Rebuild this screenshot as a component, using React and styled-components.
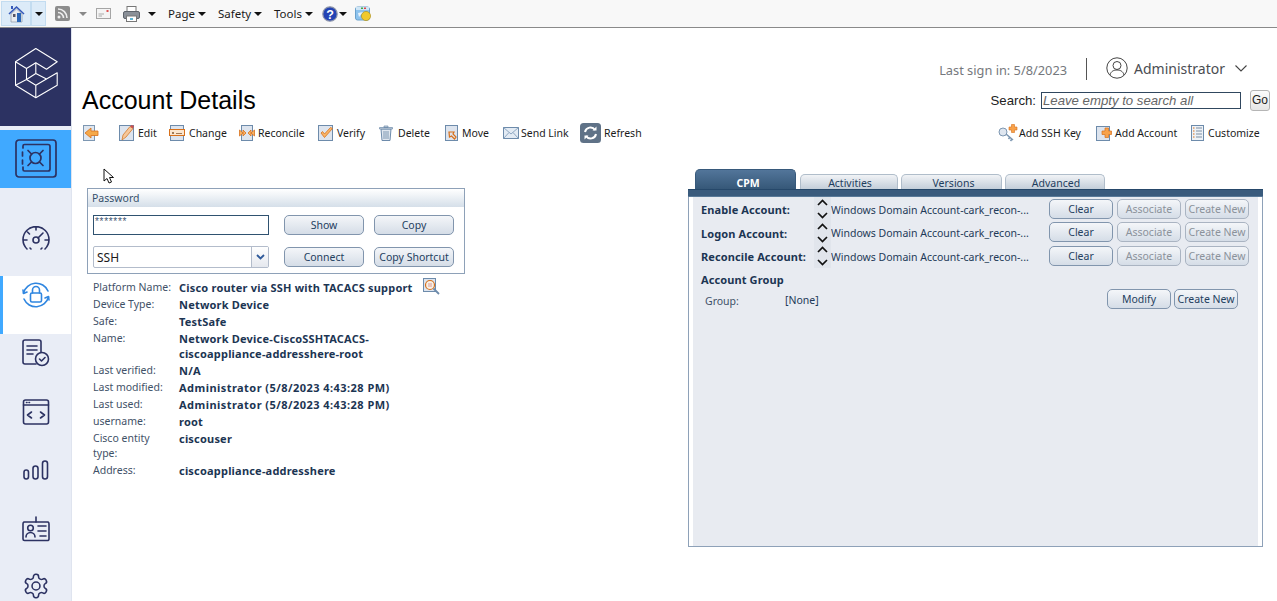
import React from "react";
import styled, { createGlobalStyle } from "styled-components";

const Global = createGlobalStyle`
  html, body { margin: 0; padding: 0; height: 100%; overflow: hidden; background: #fff; }
  #root { height: 100%; }
  * { box-sizing: border-box; }
  svg { flex: none; display: block; }
`;
const UI = `"Noto Sans", "DejaVu Sans", sans-serif`;
const NAVY = "#2c3262";

const Page = styled.div`width: 1277px; height: 601px; display: flex; flex-direction: column; overflow: hidden; font-family: ${UI}; font-size: 11px;`;

/* browser command bar */
const CommandBar = styled.div`height: 28px; flex: none; display: flex; align-items: center; background: #f8f8f8; border-bottom: 1px solid #8a8a8a; padding-left: 1px;`;
const CmdSlot = styled.div`
  display: flex; align-items: center; justify-content: ${p => p.$text ? "flex-start" : "center"}; gap: 3px; height: 25px; flex: none;
  width: ${p => p.$w}px; margin-left: ${p => p.$ml || 0}px;
  background: ${p => p.$on ? "#dcebf8" : "transparent"};
  border: ${p => p.$on ? "1px solid #c3dcf0" : "0"};
  font-size: 11.5px; color: #1a1a1a;
`;
const Caret = styled.span`width: 0; height: 0; flex: none; border-left: 4px solid transparent; border-right: 4px solid transparent; border-top: 4px solid ${p => p.$c || "#111"};`;

const Body = styled.div`flex: 1; display: flex; min-height: 0;`;

/* product sidebar */
const Sidebar = styled.nav`width: 72px; flex: none; background: #e9edf6; border-right: 1px solid #dfe4ef; overflow: hidden;`;
const Brand = styled.div`height: 98px; background: ${NAVY}; display: flex; align-items: center; justify-content: center; margin-right: -1px; padding-bottom: 8px;`;
const VaultTile = styled.div`height: 58px; margin: 4px -1px 30px 0; background: #40a9ff; display: flex; align-items: center; justify-content: center;`;
const NavTile = styled.div`
  height: 58px; display: flex; justify-content: center; padding-top: ${p => p.$pt ?? 5}px; margin-right: ${p => p.$on ? -1 : 0}px;
  background: ${p => p.$on ? "#fff" : "transparent"};
  border-left: 3px solid ${p => p.$on ? "#40a9ff" : "transparent"};
  padding-right: 3px;
`;

const Main = styled.main`flex: 1; min-width: 0; display: flex; flex-direction: column; position: relative;`;
const UserRow = styled.div`height: 57px; flex: none; display: flex; align-items: flex-end; justify-content: flex-end; padding: 0 30px 4px 0;`;
const LastSign = styled.span`font-size: 12.8px; color: #75787d; margin-bottom: 2px;`;
const Divider = styled.span`width: 1px; height: 22px; background: #555; margin: 0 19px 1px; `;
const UserName = styled.span`font-size: 14px; color: #4a4d52; margin: 0 10px 0 6px;`;
const UserBox = styled.div`display: flex; align-items: center; margin-bottom: 2px;`;

const TitleRow = styled.div`height: 33px; flex: none; display: flex; align-items: center; justify-content: space-between; padding: 0 7px 2px 10px;`;
const Title = styled.h1`margin: 0; font: 400 25px "Liberation Sans", Arial, sans-serif; color: #000;`;
const SearchBox = styled.div`display: flex; align-items: center; font: 13.2px "Liberation Sans", Arial, sans-serif; color: #222;`;
const SearchInput = styled.div`width: 200px; height: 17px; margin-left: 5px; border: 1px solid #30475f; font: italic 13.2px/15px "Liberation Sans", Arial, sans-serif; color: #666; padding-left: 1px; white-space: nowrap;`;
const GoButton = styled.div`width: 20px; height: 21px; margin-left: 9px; border: 1px solid #b5b5b5; border-radius: 3px; background: linear-gradient(#fbfbfb, #e6e6e6); font: 12px/19px "Liberation Sans", Arial, sans-serif; text-align: center; color: #222;`;

const ActionRow = styled.div`height: 30px; flex: none; display: flex; align-items: center; justify-content: space-between; padding: 0 19px 1px 11px;`;
const ActionGroup = styled.div`display: flex; align-items: center;`;
const Action = styled.div`display: flex; align-items: center; gap: ${p => p.$gap ?? 4}px; width: ${p => p.$w ? p.$w + "px" : "auto"}; flex: none; font-size: 10.5px; color: #1b1b1b; white-space: nowrap;`;

const Columns = styled.div`flex: 1; display: flex; min-height: 0; position: relative;`;
const Left = styled.section`width: 616px; flex: none; padding: 40px 0 0 15px; position: relative;`;
const CursorMark = styled.span`position: absolute; left: 31px; top: 20px;`;
const PasswordBox = styled.div`width: 378px; height: 86px; border: 1px solid #8ea1b8;`;
const BoxHeader = styled.div`height: 18px; padding-left: 4px; line-height: 18px; font-size: 10.5px; color: #36506c; background: linear-gradient(#fff, #d5dfe9);`;
const BoxGrid = styled.div`display: grid; grid-template-columns: 176px 170px; column-gap: 15px; grid-template-rows: 20px 22px; row-gap: 11px; padding: 8px 0 0 5px; align-items: center;`;
const PwInput = styled.div`height: 20px; border: 1px solid #2f5270; background: #fff; font: 10px/10px "Liberation Sans", sans-serif; color: #3d5570; padding: 1px 0 0 1px; letter-spacing: .7px;`;
const SelectBox = styled.div`height: 22px; border: 1px solid #b3bccb; border-radius: 2px; background: #fff; display: flex; font: 12px/21px "Noto Sans", sans-serif; color: #1a1a1a; padding-left: 3px; justify-content: space-between;`;
const SelectArrow = styled.span`width: 17px; border-left: 1px solid #b3bccb; background: linear-gradient(#fff, #e5e8ee); display: flex; align-items: flex-start; justify-content: center; padding-top: 7px;`;
const PanelButton = styled.div`
  height: 20px; width: ${p => p.$w ? p.$w + "px" : "auto"}; flex: none;
  border: 1px solid ${p => p.$off ? "#aab4c2" : "#8195ad"}; border-radius: 5px;
  background: linear-gradient(#f4f6f9, #d5dde7);
  font-size: 10.5px; line-height: 18px; text-align: center; white-space: nowrap;
  color: ${p => p.$off ? "#8b929b" : "#24405f"};
`;
const ButtonPair = styled.div`display: grid; grid-template-columns: 80px 80px; column-gap: 10px;`;

const Details = styled.div`display: grid; grid-template-columns: 86px auto; justify-content: start; padding: 6px 0 0 6px; line-height: 15px; row-gap: 2px;`;
const DLabel = styled.div`color: #3f5168; font-size: 10.5px; padding-right: 6px;`;
const DValue = styled.div`color: #1c3553; font-weight: 700; display: flex; align-items: flex-start; gap: 10px; white-space: nowrap; letter-spacing: ${p => p.$wide ? ".45px" : ".2px"};`;
const LensMark = styled.span`height: 13px; margin-top: -2px;`;

const Right = styled.section`width: 575px; flex: none; padding-top: 21px; display: flex; flex-direction: column;`;
const Tabs = styled.div`height: 20px; flex: none; display: flex; align-items: flex-end; padding-left: 7px; gap: 3px;`;
const Tab = styled.div`
  height: ${p => p.$on ? 20 : 15}px; width: ${p => p.$w}px; flex: none; margin-right: ${p => p.$on ? 1 : 0}px;
  border: 1px solid ${p => p.$on ? "#37597b" : "#b0bdca"}; border-bottom: 0; border-radius: 5px 5px 0 0;
  background: ${p => p.$on ? "linear-gradient(#52759a, #365878)" : "linear-gradient(#f1f3f6, #c3ced9)"};
  color: ${p => p.$on ? "#fff" : "#1f3e5e"}; font-weight: ${p => p.$on ? 700 : 400}; font-size: 10.5px;
  line-height: ${p => p.$on ? 26 : 16}px; text-align: center; padding-left: ${p => p.$pl || 0}px;
`;
const TabBar = styled.div`height: 8px; flex: none; background: #3a5b7d; border-top: 1px solid #26486a; border-bottom: 1px solid #5a7a99;`;
const TabPanel = styled.div`height: 350px; flex: none; border: 1px solid #8ea1b8; border-top: 0; background: #fff; padding: 0 4px;`;
const TabInner = styled.div`height: 100%; background: #e8ebf1; padding-left: 8px;`;
const TargetGrid = styled.div`display: grid; grid-template-columns: 113px 17px 218px 68px 68px 64px; grid-auto-rows: 23.5px; align-items: center;`;
const TLabel = styled.div`font-weight: 700; color: #1c3553; font-size: 11px; letter-spacing: .1px; padding-top: 2px;`;
const Spin = styled.div`height: 100%; background: #e1e5ec; display: flex; align-items: center; justify-content: center; padding-top: 1px;`;
const TValue = styled.div`color: #1e3a58; white-space: nowrap; overflow: hidden; font-size: 10.5px; padding-top: 2px;`;
const GroupHead = styled.div`font-weight: 700; color: #1c3553; margin-top: 4px; height: 15px; line-height: 15px; letter-spacing: .1px;`;
const GroupRow = styled.div`display: flex; align-items: center; height: 20px; margin-top: 2px; padding-left: 4px; color: #1e3a58; font-size: 10.5px;`;
const GroupLabel = styled.span`width: 80px; color: #3f5168; padding-top: 4px;`;
const GroupValue = styled.span`flex: 1; padding-top: 2px;`;
const GroupButtons = styled.div`display: flex; gap: 3px; padding-right: 20px;`;

/* drawn icons */
const S = { fill: "none", stroke: NAVY, strokeWidth: 1.6, strokeLinecap: "round", strokeLinejoin: "round" };

const Logo = () => (
  <svg width="43" height="51" viewBox="-0.5 -0.5 43 51" fill="none" stroke="#fff" strokeWidth="1.1" strokeLinejoin="round">
    <path d="M20.3 0 L41.7 13.3 L31 20.7 L20.3 14.3 L11 20 L11 31 L20.3 36.7 L41.7 24.3 L41.7 36.7 L20.3 49.3 L0 36.7 L0 13.3 Z" />
    <path d="M0 13.3 L11 20 M20.3 14.3 L20.3 25 M11 31 L20.3 25 L31 30.5 M20.3 36.7 L20.3 49.3 M0 36.7 L11 31" />
  </svg>
);
const VaultIcon = () => (
  <svg width="42" height="40" viewBox="0 0 42 40" fill="none" stroke={NAVY} strokeWidth="1.7" strokeLinecap="round" strokeLinejoin="round">
    <rect x="1" y="1" width="40" height="37" rx="3" />
    <path d="M8 9 V7 a1.5 1.5 0 0 1 1.5-1.5 H33 a2 2 0 0 1 2 2 V30 a2 2 0 0 1-2 2 H9.5 A1.5 1.5 0 0 1 8 30.5 V28 M7.5 13 V17 M7.5 21 V25" />
    <circle cx="20.5" cy="19" r="5.5" />
    <path d="M16.5 15 L13 11.5 M24.5 15 L28 11.5 M16.5 23 L13 26.5 M24.5 23 L28 26.5" />
  </svg>
);
const Gauge = () => (
  <svg width="28" height="26" viewBox="0 0 28 26" {...S}>
    <path d="M5 23 A13 13 0 1 1 23 23 M2 14 H5 M23 14 H26 M5.5 6 L7.5 8 M14 1.5 V4" />
    <circle cx="14" cy="14" r="3" />
    <path d="M16 12 L21 7" />
    <path d="M8 22 L9 23 M20 22 L19 23" />
  </svg>
);
const LockCycle = () => (
  <svg width="28" height="28" viewBox="0 0 28 28" fill="none" stroke="#2f86e0" strokeWidth="1.6" strokeLinecap="round" strokeLinejoin="round">
    <path d="M1.5 12 A13 13 0 0 1 26 10 M26.5 16 A13 13 0 0 1 2 18" />
    <path d="M1 9 L1.5 12.5 L5 11 M27 19 L26.5 15.5 L23 17" />
    <rect x="8.5" y="12" width="11" height="9" rx="1.5" />
    <path d="M10.5 12 V9 a3.5 3.5 0 0 1 7 0 V12" />
  </svg>
);
const DocCheck = () => (
  <svg width="28" height="28" viewBox="0 0 28 28" {...S}>
    <path d="M14 25 H3 a2 2 0 0 1-2-2 V3 a2 2 0 0 1 2-2 H17 a2 2 0 0 1 2 2 V13" />
    <path d="M5 7 H15 M5 11 H15 M5 15 H11" />
    <circle cx="20" cy="20" r="6.5" />
    <path d="M17.5 20 L19.5 22 L23 18.5" />
  </svg>
);
const CodeWin = () => (
  <svg width="28" height="27" viewBox="0 0 28 27" {...S}>
    <rect x="1.5" y="1" width="25" height="24" rx="2" />
    <path d="M1.5 6 H26.5 M9.5 13 L5.5 16 L9.5 19 M18.5 13 L22.5 16 L18.5 19" />
    <path d="M4.5 3.5 H5 M7 3.5 H7.5" />
  </svg>
);
const Bars = () => (
  <svg width="26" height="20" viewBox="0 0 26 20" {...S} style={{ marginTop: 5 }}>
    <rect x="1" y="10" width="4.5" height="9" rx="2.2" />
    <rect x="10" y="6" width="5" height="13" rx="2.5" />
    <rect x="19.5" y="1" width="5" height="18" rx="2.5" />
  </svg>
);
const IdCard = () => (
  <svg width="30" height="26" viewBox="0 0 30 26" {...S}>
    <path d="M15 1 V6" />
    <path d="M10 6 H27 a2 2 0 0 1 1 2 V23 a1.5 1.5 0 0 1-1.5 1.5 H3.5 A1.5 1.5 0 0 1 2 23 V8 a2 2 0 0 1 1-2 H10" />
    <circle cx="9.5" cy="12" r="2.8" />
    <path d="M5 21 a4.5 4.5 0 0 1 9 0 M17 10 H25 M17 15 H25 M19 20 H25" />
  </svg>
);
const Gear = () => (
  <svg width="28" height="28" viewBox="0 0 24 24" fill="none" stroke={NAVY} strokeWidth="1.35" strokeLinecap="round" strokeLinejoin="round">
    <path d="M12.22 2h-.44a2 2 0 0 0-2 2v.18a2 2 0 0 1-1 1.73l-.43.25a2 2 0 0 1-2 0l-.15-.08a2 2 0 0 0-2.73.73l-.22.38a2 2 0 0 0 .73 2.73l.15.1a2 2 0 0 1 1 1.72v.51a2 2 0 0 1-1 1.74l-.15.09a2 2 0 0 0-.73 2.73l.22.38a2 2 0 0 0 2.73.73l.15-.08a2 2 0 0 1 2 0l.43.25a2 2 0 0 1 1 1.73V20a2 2 0 0 0 2 2h.44a2 2 0 0 0 2-2v-.18a2 2 0 0 1 1-1.73l.43-.25a2 2 0 0 1 2 0l.15.08a2 2 0 0 0 2.73-.73l.22-.39a2 2 0 0 0-.73-2.73l-.15-.08a2 2 0 0 1-1-1.74v-.5a2 2 0 0 1 1-1.74l.15-.09a2 2 0 0 0 .73-2.73l-.22-.38a2 2 0 0 0-2.73-.73l-.15.08a2 2 0 0 1-2 0l-.43-.25a2 2 0 0 1-1-1.73V4a2 2 0 0 0-2-2z" />
    <circle cx="12" cy="12" r="3.4" />
  </svg>
);

const Home = () => (
  <svg width="17" height="18" viewBox="0 0 17 18">
    <path d="M1 9 L8.5 2 L16 9" fill="none" stroke="#3558b8" strokeWidth="1.6" />
    <path d="M3 9 L8.5 4 L14 9 V17 H3 Z" fill="#e9ecef" stroke="#8b96a5" strokeWidth=".7" />
    <rect x="9" y="8" width="4" height="9" fill="#2a66b8" />
    <rect x="5" y="9" width="2.5" height="3" fill="#556" />
    <rect x="3" y="1" width="2" height="3" fill="#3558b8" />
  </svg>
);
const Rss = () => (
  <svg width="15" height="15" viewBox="0 0 15 15">
    <rect width="15" height="15" rx="2" fill="#8d8d8d" />
    <circle cx="4" cy="11" r="1.5" fill="#eee" />
    <path d="M3 6.5 A5.5 5.5 0 0 1 8.5 12 M3 3 A9 9 0 0 1 12 12" fill="none" stroke="#eee" strokeWidth="1.6" />
  </svg>
);
const Mail = () => (
  <svg width="15" height="11" viewBox="0 0 15 11">
    <rect x=".5" y=".5" width="14" height="10" fill="#f4f4f4" stroke="#a5a5a5" />
    <rect x="10.5" y="2" width="2" height="2" fill="#d55" />
    <path d="M2.5 6 H8 M2.5 8 H6" stroke="#aaa" />
  </svg>
);
const Printer = () => (
  <svg width="17" height="16" viewBox="0 0 17 16">
    <rect x="4" y=".5" width="9" height="6" fill="#fff" stroke="#777" />
    <rect x=".5" y="5.5" width="16" height="7" rx="1.5" fill="#8a9098" stroke="#5d636b" />
    <rect x="3.5" y="10" width="10" height="5.5" fill="#fff" stroke="#777" />
    <rect x="7" y="12" width="3" height="2" fill="#5fb6d6" />
  </svg>
);
const Help = () => (
  <svg width="16" height="16" viewBox="0 0 16 16">
    <circle cx="8" cy="8" r="7.2" fill="#2343b4" stroke="#8b93a8" strokeWidth="1.2" />
    <text x="8" y="12.5" textAnchor="middle" fontSize="12.5" fontWeight="700" fontFamily="Liberation Sans" fill="#fff">?</text>
  </svg>
);
const Research = () => (
  <svg width="17" height="16" viewBox="0 0 17 16">
    <rect x=".5" y="1" width="14" height="13" rx="2" fill="#8dc3ee" stroke="#6aa1cc" />
    <rect x="1" y="1" width="13" height="3" fill="#cfe6f6" />
    <rect x="6" y="1.5" width="2" height="1.5" fill="#4a4" /><rect x="9" y="1.5" width="2" height="1.5" fill="#d44" />
    <circle cx="11" cy="10" r="4.6" fill="#f0c92e" stroke="#a88a12" strokeWidth=".6" />
    <path d="M3 7 L8 6 L4 11 Z" fill="#fff" opacity=".8" />
  </svg>
);

const Sheet = ({ children, w = 15, h = 16 }) => (
  <svg width={w} height={h} viewBox="0 0 15 16">
    <rect x=".5" y=".5" width="14" height="15" fill="#dde4ee" stroke="#6d8bab" />
    {children}
  </svg>
);
const BackI = () => <svg width="16" height="16" viewBox="0 0 16 16"><rect x=".5" y=".5" width="11" height="15" fill="#dfe6ef" stroke="#7d97b2" /><path d="M2 8 L8 3 V6 H15 V10.5 H8 V13 Z" fill="#f5a94a" stroke="#d8701a" strokeWidth=".8" /></svg>;
const EditI = () => <Sheet><path d="M3 15 L4 10 L11 1.5 L14 3.5 L7 12 Z" fill="#f6c79a" stroke="#d37a2a" strokeWidth=".8" /><path d="M11 1.5 L14 3.5 L15 1 L12.5 0 Z" fill="#c95050" /></Sheet>;
const ChangeI = () => <svg width="16" height="16" viewBox="0 0 16 16"><rect x="1.5" y=".5" width="13" height="15" fill="#dde4ee" stroke="#6d8bab" /><rect x=".5" y="4.5" width="15" height="6" fill="#fbe6cf" stroke="#d8701a" /><path d="M3 7 L5 9 M5 7 L3 9 M7 8.5 H13" stroke="#7a4a20" strokeWidth=".7" /></svg>;
const ReconcileI = () => <svg width="16" height="16" viewBox="0 0 16 16"><rect x="2.5" y=".5" width="11" height="15" fill="#dde4ee" stroke="#6d8bab" /><path d="M.5 5 L4 8 L.5 11 V5 M7 8 L4 5 V11 Z M15.5 5 L12 8 L15.5 11 Z M9 8 L12 5 V11 Z" fill="#f8b568" stroke="#d8701a" strokeWidth=".8" /></svg>;
const VerifyI = () => <Sheet><path d="M3 8 L6.5 12.5 L14.5 3.5 L12.5 2.5 L6.5 9 L4.5 6.5 Z" fill="#f8b568" stroke="#d8701a" strokeWidth=".8" /></Sheet>;
const DeleteI = () => <svg width="14" height="16" viewBox="0 0 14 16"><path d="M2 4 H12 L11 15.5 H3 Z" fill="#dfe6ef" stroke="#6d8bab" /><path d="M.5 2.5 H13.5 V4 H.5 Z M5 1 H9 V2.5 H5 Z" fill="#c5d1de" stroke="#6d8bab" strokeWidth=".7" /><path d="M5 6 V14 M7 6 V14 M9 6 V14" stroke="#7d97b2" /></svg>;
const MoveI = () => <svg width="13" height="16" viewBox="0 0 13 16"><rect x=".5" y=".5" width="12" height="15" fill="#dde4ee" stroke="#6d8bab" /><path d="M4 7 H9 L8 9 L11 12 L9.5 14 L6.5 11 L4.5 12 Z" fill="none" stroke="#d8701a" strokeWidth="1.2" /></svg>;
const MailI = () => <svg width="16" height="12" viewBox="0 0 16 12"><rect x=".5" y=".5" width="15" height="11" fill="#e3ebf4" stroke="#6d8bab" /><path d="M.5 .5 L8 7 L15.5 .5 M.5 11.5 L6 5.5 M15.5 11.5 L10 5.5" fill="none" stroke="#8fa8c2" /></svg>;
const RefreshI = () => <svg width="21" height="20" viewBox="0 0 21 20"><rect width="21" height="20" rx="3.5" fill="#5f7287" /><path d="M5 9 A5.5 5.5 0 0 1 15 7 M16 11 A5.5 5.5 0 0 1 6 13" fill="none" stroke="#fff" strokeWidth="2" /><path d="M12.5 7.5 H16.5 V3.5 Z M8.5 12.5 H4.5 V16.5 Z" fill="#fff" /></svg>;
const KeyI = () => <svg width="20" height="18" viewBox="0 0 20 18"><circle cx="5" cy="8" r="4" fill="#dfe6ef" stroke="#7d97b2" /><path d="M8 10 L15 16 M12 13 L10.5 15 M14 15 L12.5 17" stroke="#7d97b2" strokeWidth="1.6" fill="none" /><path d="M11 3 H13.5 V.5 H16.5 V3 H19 V6 H16.5 V8.5 H13.5 V6 H11 Z" fill="#f8a24a" stroke="#d8701a" strokeWidth=".6" /></svg>;
const AddI = () => <svg width="16" height="17" viewBox="0 0 16 17"><rect x=".5" y="2.5" width="13" height="14" fill="#dde4ee" stroke="#6d8bab" /><path d="M6 7 H9 V4 H12.5 V7 H15.5 V10.5 H12.5 V13.5 H9 V10.5 H6 Z" fill="#f8a24a" stroke="#d8701a" strokeWidth=".7" /></svg>;
const CustomI = () => <svg width="13" height="16" viewBox="0 0 13 16"><rect x=".5" y=".5" width="12" height="15" fill="#eef2f7" stroke="#6d8bab" /><path d="M2 3 H3.5 M2 6 H3.5 M2 9 H3.5 M2 12 H3.5" stroke="#d8701a" /><path d="M5 3 H11 M5 6 H11 M5 9 H11 M5 12 H11" stroke="#7d8fa3" /></svg>;
const Lens = () => <svg width="17" height="17" viewBox="0 0 17 17"><rect x=".5" y=".5" width="12" height="13" fill="#dde4ee" stroke="#6d8bab" /><circle cx="7" cy="7" r="4.5" fill="#f7efe4" stroke="#d8701a" strokeWidth="1.2" /><path d="M5 6 H9 M5 8 H9" stroke="#c77" strokeWidth=".7" /><path d="M10.5 10.5 L16 16" stroke="#6d8bab" strokeWidth="1.8" /></svg>;
const UserCircle = () => (
  <svg width="22" height="22" viewBox="0 0 22 22" fill="none" stroke="#444" strokeWidth="1">
    <circle cx="11" cy="11" r="10.2" />
    <circle cx="11" cy="8.5" r="4" />
    <path d="M4 18 C5 14 8 13 11 13 S17 14 18 18" />
  </svg>
);
const Chevron = () => <svg width="12" height="7" viewBox="0 0 12 7" fill="none" stroke="#444" strokeWidth="1.1"><path d="M.5 .5 L6 6 L11.5 .5" /></svg>;
const SelArrow = () => <svg width="9" height="6" viewBox="0 0 9 6" fill="none" stroke="#2f5a9a" strokeWidth="1.8"><path d="M1 1 L4.5 4.5 L8 1" /></svg>;
const UpDown = () => <svg width="11" height="20" viewBox="0 0 11 20" fill="none" stroke="#111" strokeWidth="1.7"><path d="M1 6 L5.5 1.5 L10 6 M1 14 L5.5 18.5 L10 14" /></svg>;
const Arrow = () => <svg width="14" height="16" viewBox="0 0 14 16"><path d="M1 1 V13 L4 10.5 L6 15 L8.5 14 L6.5 9.5 L10.5 9.5 Z" fill="#fff" stroke="#111" strokeWidth="1" strokeLinejoin="round" /></svg>;

const details = [
  { l: "Platform Name:", v: "Cisco router via SSH with TACACS support", lens: true },
  { l: "Device Type:", v: "Network Device" },
  { l: "Safe:", v: "TestSafe" },
  { l: "Name:", v: <span>Network Device-CiscoSSHTACACS-<br />ciscoappliance-addresshere-root</span> },
  { l: "Last verified:", v: "N/A" },
  { l: "Last modified:", v: "Administrator (5/8/2023 4:43:28 PM)", wide: true },
  { l: "Last used:", v: "Administrator (5/8/2023 4:43:28 PM)", wide: true },
  { l: "username:", v: "root" },
  { l: "Cisco entity type:", v: "ciscouser" },
  { l: "Address:", v: "ciscoappliance-addresshere" },
];
const targets = ["Enable Account:", "Logon Account:", "Reconcile Account:"];

export default function App() {
  return (
    <Page>
      <Global />
      <CommandBar>
        <CmdSlot $w={30} $on><Home /></CmdSlot>
        <CmdSlot $w={15} $on><Caret /></CmdSlot>
        <CmdSlot $w={16} $ml={8}><Rss /></CmdSlot>
        <CmdSlot $w={10} $ml={8}><Caret $c="#888" /></CmdSlot>
        <CmdSlot $w={16} $ml={7}><Mail /></CmdSlot>
        <CmdSlot $w={18} $ml={11}><Printer /></CmdSlot>
        <CmdSlot $w={10} $ml={7}><Caret /></CmdSlot>
        <CmdSlot $w={39} $ml={11} $text>Page<Caret /></CmdSlot>
        <CmdSlot $w={45} $ml={11} $text>Safety<Caret /></CmdSlot>
        <CmdSlot $w={40} $ml={11} $text>Tools<Caret /></CmdSlot>
        <CmdSlot $w={16} $ml={8}><Help /></CmdSlot>
        <CmdSlot $w={10}><Caret /></CmdSlot>
        <CmdSlot $w={17} $ml={7}><Research /></CmdSlot>
      </CommandBar>
      <Body>
        <Sidebar>
          <Brand><Logo /></Brand>
          <VaultTile><VaultIcon /></VaultTile>
          <NavTile $pt={8}><Gauge /></NavTile>
          <NavTile $on><LockCycle /></NavTile>
          <NavTile><DocCheck /></NavTile>
          <NavTile $pt={7}><CodeWin /></NavTile>
          <NavTile><Bars /></NavTile>
          <NavTile $pt={8}><IdCard /></NavTile>
          <NavTile $pt={6}><Gear /></NavTile>
        </Sidebar>
        <Main>
          <UserRow>
            <LastSign>Last sign in: 5/8/2023</LastSign>
            <Divider />
            <UserBox><UserCircle /><UserName>Administrator</UserName><Chevron /></UserBox>
          </UserRow>
          <TitleRow>
            <Title>Account Details</Title>
            <SearchBox>Search:<SearchInput>Leave empty to search all</SearchInput><GoButton>Go</GoButton></SearchBox>
          </TitleRow>
          <ActionRow>
            <ActionGroup>
              <Action $w={36}><BackI /></Action>
              <Action $w={50}><EditI />Edit</Action>
              <Action $w={70}><ChangeI />Change</Action>
              <Action $w={79} $gap={3}><ReconcileI />Reconcile</Action>
              <Action $w={61}><VerifyI />Verify</Action>
              <Action $w={66} $gap={5}><DeleteI />Delete</Action>
              <Action $w={58}><MoveI />Move</Action>
              <Action $w={77} $gap={2}><MailI />Send Link</Action>
              <Action $gap={3}><RefreshI />Refresh</Action>
            </ActionGroup>
            <ActionGroup>
              <Action $w={98} $gap={1}><KeyI />Add SSH Key</Action>
              <Action $w={95} $gap={3}><AddI />Add Account</Action>
              <Action $w={67}><CustomI />Customize</Action>
            </ActionGroup>
          </ActionRow>
          <Columns>
            <Left>
              <CursorMark><Arrow /></CursorMark>
              <PasswordBox>
                <BoxHeader>Password</BoxHeader>
                <BoxGrid>
                  <PwInput>*******</PwInput>
                  <ButtonPair>
                    <PanelButton>Show</PanelButton>
                    <PanelButton>Copy</PanelButton>
                  </ButtonPair>
                  <SelectBox>SSH<SelectArrow><SelArrow /></SelectArrow></SelectBox>
                  <ButtonPair>
                    <PanelButton>Connect</PanelButton>
                    <PanelButton>Copy Shortcut</PanelButton>
                  </ButtonPair>
                </BoxGrid>
              </PasswordBox>
              <Details>
                {details.map(d => (
                  <React.Fragment key={d.l}>
                    <DLabel>{d.l}</DLabel>
                    <DValue $wide={d.wide}>{d.v}{d.lens && <LensMark><Lens /></LensMark>}</DValue>
                  </React.Fragment>
                ))}
              </Details>
            </Left>
            <Right>
              <Tabs>
                <Tab $on $w={101} $pl={5}>CPM</Tab>
                <Tab $w={98} $pl={2}>Activities</Tab>
                <Tab $w={101} $pl={4}>Versions</Tab>
                <Tab $w={100} $pl={2}>Advanced</Tab>
              </Tabs>
              <TabBar />
              <TabPanel>
                <TabInner>
                  <TargetGrid>
                    {targets.map(t => (
                      <React.Fragment key={t}>
                        <TLabel>{t}</TLabel>
                        <Spin><UpDown /></Spin>
                        <TValue>Windows Domain Account-cark_recon-...</TValue>
                        <PanelButton $w={64}>Clear</PanelButton>
                        <PanelButton $w={64} $off>Associate</PanelButton>
                        <PanelButton $w={64} $off>Create New</PanelButton>
                      </React.Fragment>
                    ))}
                  </TargetGrid>
                  <GroupHead>Account Group</GroupHead>
                  <GroupRow>
                    <GroupLabel>Group:</GroupLabel>
                    <GroupValue>[None]</GroupValue>
                    <GroupButtons>
                      <PanelButton $w={64}>Modify</PanelButton>
                      <PanelButton $w={64}>Create New</PanelButton>
                    </GroupButtons>
                  </GroupRow>
                </TabInner>
              </TabPanel>
            </Right>
          </Columns>
        </Main>
      </Body>
    </Page>
  );
}
